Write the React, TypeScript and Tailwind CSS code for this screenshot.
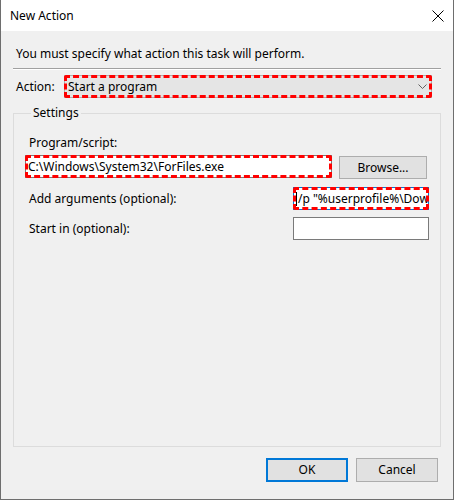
import * as React from "react";

const FONT = "font-['Noto_Sans',_'Open_Sans',_sans-serif] text-[12px] text-black";

function RedMark() {
  return (
    <span className="pointer-events-none absolute -inset-[1px] rounded-[3px] border-[3px] border-dashed border-[#ff0000]" />
  );
}

function Field({
  className,
  children,
  marked,
  focused,
}: {
  className: string;
  children?: React.ReactNode;
  marked?: boolean;
  focused?: boolean;
}) {
  return (
    <div
      className={`relative flex h-[23px] items-center border bg-white ${
        focused ? "border-[#0078d7]" : "border-[#7a7a7a]"
      } ${className}`}
    >
      <div className="h-full min-w-0 flex-1 overflow-hidden whitespace-nowrap pl-[2px] leading-[21px]">
        {children}
      </div>
      {marked && <RedMark />}
    </div>
  );
}

function Button({ label, primary, className }: { label: string; primary?: boolean; className: string }) {
  return (
    <button
      className={`flex items-center justify-center bg-[#e1e1e1] ${
        primary ? "border-2 border-[#0078d7]" : "border border-[#adadad]"
      } ${className}`}
    >
      {label}
    </button>
  );
}

export default function App() {
  return (
    <div className={`flex h-[500px] w-[454px] flex-col border-x border-b border-[#6e6e6e] bg-[#f0f0f0] ${FONT}`}>
      {/* title bar */}
      <div className="flex h-[31px] shrink-0 items-center justify-between bg-white pl-[9px] pr-[9px]">
        <span className="leading-none">New Action</span>
        <svg width="12" height="12" viewBox="0 0 12 12" className="mr-[0px]">
          <path d="M0.5 0.5 L11.5 11.5 M11.5 0.5 L0.5 11.5" stroke="#000" strokeWidth="1" fill="none" />
        </svg>
      </div>

      <div className="flex flex-1 flex-col px-[12px]">
        <div className="mt-[15px] h-[16px] pl-[3px] leading-[16px]">
          You must specify what action this task will perform.
        </div>
        <div className="mt-[6px] w-[428px] border-t border-b border-t-[#a0a0a0] border-b-white" />

        {/* action */}
        <div className="mt-[5px] flex h-[23px] items-center">
          <span className="w-[51px] pl-[3px]">Action:</span>
          <div className="relative flex h-[23px] w-[368px] items-center justify-between border border-[#adadad] bg-[#e5e5e5] pl-[3px] pr-[4px]">
            <span>Start a program</span>
            <svg width="9" height="5" viewBox="0 0 9 5">
              <path d="M0.5 0.5 L4.5 4.5 L8.5 0.5" stroke="#606060" strokeWidth="1" fill="none" />
            </svg>
            <RedMark />
          </div>
        </div>

        {/* settings group */}
        <fieldset className="mt-[8px] h-[341px] w-[428px] border border-[#dcdcdc] px-[11px]">
          <legend className="ml-[6px] px-[2px] leading-[14px]">Settings</legend>
          <div className="mt-[15px] h-[16px] pl-[4px] leading-[16px]">Program/script:</div>
          <div className="mt-[4px] flex items-start">
            <Field className="w-[307px]" marked>
              C:\Windows\System32\ForFiles.exe
            </Field>
            <Button label="Browse..." className="ml-[7px] mt-[1px] h-[23px] w-[88px]" />
          </div>
          <div className="mt-[8px] flex items-center">
            <span className="w-[268px] pl-[4px]">Add arguments (optional):</span>
            <Field className="w-[136px]" marked focused>
              <span className="mr-[1px] inline-block h-[14px] w-[1px] translate-y-[3px] bg-black" />
              /p "%userprofile%\Down
            </Field>
          </div>
          <div className="mt-[7px] flex items-center">
            <span className="w-[268px] pl-[4px]">Start in (optional):</span>
            <Field className="w-[136px]" />
          </div>
        </fieldset>

        {/* buttons */}
        <div className="mt-[11px] flex justify-end gap-[8px] pr-[3px]">
          <Button label="OK" primary className="h-[24px] w-[82px]" />
          <Button label="Cancel" className="h-[24px] w-[82px]" />
        </div>
      </div>
    </div>
  );
}
